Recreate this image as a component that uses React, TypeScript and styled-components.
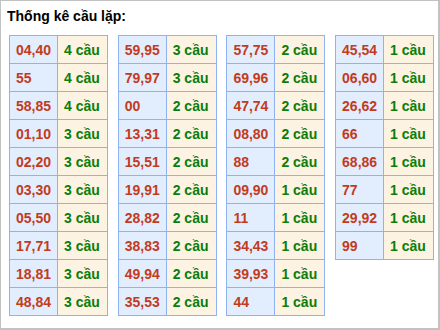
import { FC } from 'react';
import styled, { createGlobalStyle } from 'styled-components';

type Pair = [string, number];

const GlobalStyle = createGlobalStyle`
    html,
    body {
        margin: 0;
        padding: 0;
        background: #ffffff;
    }
`;

const tables: Pair[][] = [
    [
        ['04,40', 4],
        ['55', 4],
        ['58,85', 4],
        ['01,10', 3],
        ['02,20', 3],
        ['03,30', 3],
        ['05,50', 3],
        ['17,71', 3],
        ['18,81', 3],
        ['48,84', 3],
    ],
    [
        ['59,95', 3],
        ['79,97', 3],
        ['00', 2],
        ['13,31', 2],
        ['15,51', 2],
        ['19,91', 2],
        ['28,82', 2],
        ['38,83', 2],
        ['49,94', 2],
        ['35,53', 2],
    ],
    [
        ['57,75', 2],
        ['69,96', 2],
        ['47,74', 2],
        ['08,80', 2],
        ['88', 2],
        ['09,90', 1],
        ['11', 1],
        ['34,43', 1],
        ['39,93', 1],
        ['44', 1],
    ],
    [
        ['45,54', 1],
        ['06,60', 1],
        ['26,62', 1],
        ['66', 1],
        ['68,86', 1],
        ['77', 1],
        ['29,92', 1],
        ['99', 1],
    ],
];

const Box = styled.div`
    box-sizing: border-box;
    width: 440px;
    height: 330px;
    border: 1px solid #c2c2c2;
    border-right-width: 2px;
    border-bottom-width: 2px;
    padding: 7px 0 0 8px;
    font-family: 'Liberation Sans', Arial, sans-serif;
    background: #ffffff;
`;

const Title = styled.h3`
    margin: 0 0 11px -2px;
    padding: 0;
    font-size: 14px;
    line-height: 16px;
    font-weight: 700;
    color: #000000;
`;

const Columns = styled.div`
    display: flex;
    align-items: flex-start;
    gap: 9.7px;
`;

const Table = styled.table`
    border-collapse: collapse;
    width: 98px;
    table-layout: fixed;
`;

const Cell = styled.td<{ $kind: 'num' | 'count' }>`
    box-sizing: border-box;
    height: 28px;
    padding: 0 6px;
    border: 1px solid #8fb2f2;
    font-size: 14px;
    font-weight: 700;
    white-space: nowrap;
    vertical-align: middle;
    width: ${(props) => (props.$kind === 'num' ? '48px' : '50px')};
    color: ${(props) => (props.$kind === 'num' ? '#c23b1d' : '#0b7d0b')};
    background-color: ${(props) => (props.$kind === 'num' ? '#e2eefd' : '#fdf3e2')};
`;

const StatTable: FC<{ rows: Pair[] }> = ({ rows }) => (
    <Table>
        <tbody>
            {rows.map(([num, count]) => (
                <tr key={num}>
                    <Cell $kind="num">{num}</Cell>
                    <Cell $kind="count">{count} cầu</Cell>
                </tr>
            ))}
        </tbody>
    </Table>
);

const App: FC = () => (
    <>
        <GlobalStyle />
        <Box>
            <Title>Thống kê cầu lặp:</Title>
            <Columns>
                {tables.map((rows, i) => (
                    <StatTable key={i} rows={rows} />
                ))}
            </Columns>
        </Box>
    </>
);

export default App;
